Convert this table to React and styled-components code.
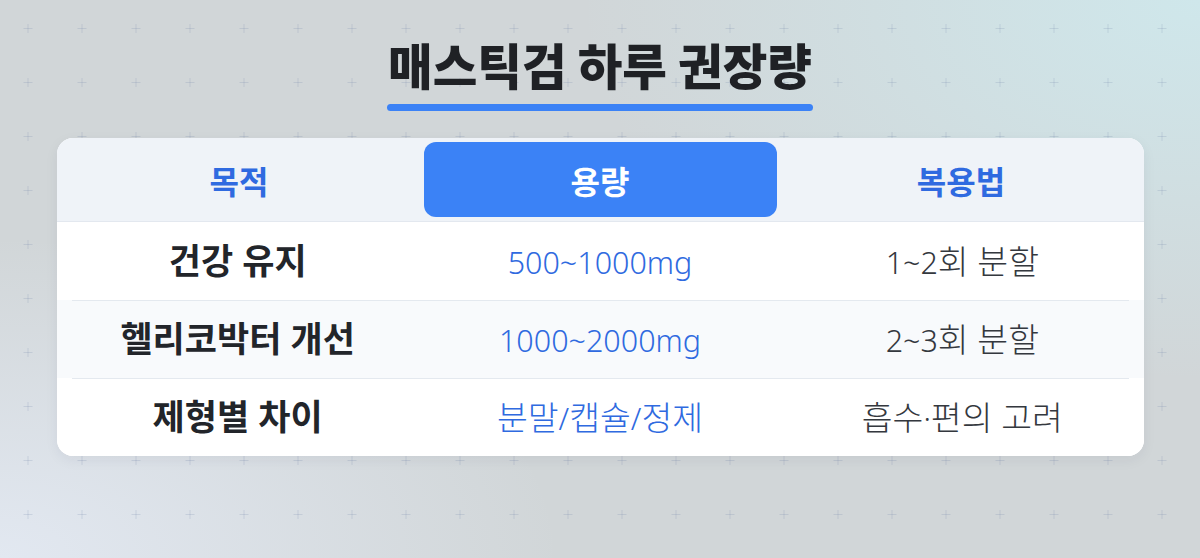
import styled, { createGlobalStyle } from "styled-components";

const GlobalStyle = createGlobalStyle`
  html, body {
    margin: 0;
    padding: 0;
  }
  body {
    font-family: "Noto Sans", "Noto Sans CJK KR", sans-serif;
  }
`;

const rows = [
  { purpose: "건강 유지", dose: "500~1000mg", method: "1~2회 분할" },
  { purpose: "헬리코박터 개선", dose: "1000~2000mg", method: "2~3회 분할" },
  { purpose: "제형별 차이", dose: "분말/캡슐/정제", method: "흡수·편의 고려" },
];

// latin runs sit a little smaller than hangul in the reference
const withLatin = (text) =>
  text
    .split(/([^\uAC00-\uD7A3\s]+)/)
    .filter(Boolean)
    .map((part, i) =>
      /[\uAC00-\uD7A3\s]/.test(part[0]) ? part : <Latin key={i}>{part}</Latin>
    );

function App() {
  return (
    <>
      <GlobalStyle />
      <Page>
        <Crosses aria-hidden="true">
          <defs>
            <pattern id="plus" x="0" y="0" width="54" height="54" patternUnits="userSpaceOnUse">
              <path d="M23.5 28.5h9M28 24v9" stroke="rgba(110,130,165,0.2)" strokeWidth="1" />
            </pattern>
          </defs>
          <rect width="100%" height="100%" fill="url(#plus)" />
        </Crosses>

        <Heading>
          <Title>매스틱검 하루 권장량</Title>
          <Underline />
        </Heading>

        <Card>
          <HeaderRow>
            <HeadCell>목적</HeadCell>
            <HeadCell $active>용량</HeadCell>
            <HeadCell>복용법</HeadCell>
          </HeaderRow>
          {rows.map((r, i) => (
            <Row key={r.purpose} $striped={i % 2 === 1} $first={i === 0}>
              <Purpose>{r.purpose}</Purpose>
              <Dose>{withLatin(r.dose)}</Dose>
              <Method>{withLatin(r.method)}</Method>
            </Row>
          ))}
        </Card>
      </Page>
    </>
  );
}

const Page = styled.div`
  position: relative;
  width: 1200px;
  height: 558px;
  overflow: hidden;
  box-sizing: border-box;
  padding-top: 32px;
  display: flex;
  flex-direction: column;
  align-items: center;
  background:
    radial-gradient(ellipse 620px 380px at 100% 0%, #cfe7eb 0%, rgba(207, 231, 235, 0) 100%),
    radial-gradient(ellipse 560px 320px at 0% 100%, #e2e8f1 0%, rgba(226, 232, 241, 0) 100%),
    #d1d6d8;
`;

const Crosses = styled.svg`
  position: absolute;
  inset: 0;
  width: 100%;
  height: 100%;
  pointer-events: none;
`;

const Heading = styled.div`
  position: relative;
  display: inline-flex;
  flex-direction: column;
  align-items: stretch;
`;

const Title = styled.h1`
  margin: 0;
  font-family: "Noto Sans CJK KR", sans-serif;
  font-weight: 900;
  font-size: 48.5px;
  line-height: 64px;
  color: #1f2125;
  text-align: center;
`;

const Underline = styled.div`
  height: 7px;
  margin: 8px -1px 0;
  border-radius: 4px;
  background: #3b82f6;
`;

const Card = styled.div`
  position: relative;
  margin-top: 27px;
  width: 1087px;
  border-radius: 16px;
  overflow: hidden;
  background: #ffffff;
  box-shadow: 0 4px 14px rgba(30, 40, 60, 0.06);
`;

const HeaderRow = styled.div`
  display: grid;
  grid-template-columns: repeat(3, 1fr);
  height: 84px;
  box-sizing: border-box;
  padding: 4px 2px;
  background: #eff3f8;
  border-bottom: 1px solid #e3e8ef;
`;

const HeadCell = styled.div`
  display: flex;
  align-items: center;
  justify-content: center;
  margin: 0 4px;
  border-radius: 12px;
  font-size: 32px;
  font-weight: 700;
  color: ${(p) => (p.$active ? "#ffffff" : "#2f6ae0")};
  background: ${(p) => (p.$active ? "#3b82f6" : "transparent")};
`;

const Row = styled.div`
  position: relative;
  display: grid;
  grid-template-columns: repeat(3, 1fr);
  align-items: center;
  height: 78px;
  background: ${(p) => (p.$striped ? "#f8fafc" : "#ffffff")};

  &::before {
    content: "";
    display: ${(p) => (p.$first ? "none" : "block")};
    position: absolute;
    top: 0;
    left: 15px;
    right: 15px;
    height: 1px;
    background: #e4e9ef;
  }
`;

const Cell = styled.div`
  text-align: center;
  font-size: 33.5px;
  line-height: 44px;
  white-space: nowrap;
`;

const Latin = styled.span`
  font-size: 0.91em;
`;

const Purpose = styled(Cell)`
  font-size: 35px;
  font-weight: 700;
  color: #22252a;
`;

const Dose = styled(Cell)`
  font-weight: 300;
  color: #2f6ae0;
`;

const Method = styled(Cell)`
  font-weight: 300;
  color: #34383e;
`;

export default App;
